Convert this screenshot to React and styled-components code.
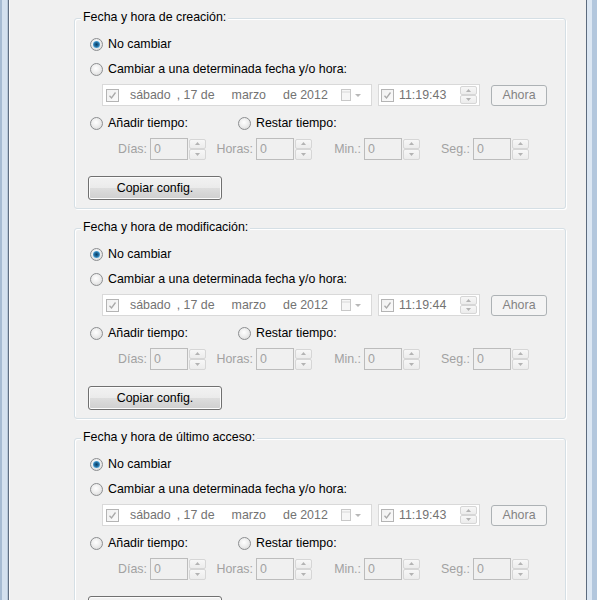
import React from "react";
import styled, { createGlobalStyle, css } from "styled-components";

const Global = createGlobalStyle`
  html, body { margin: 0; padding: 0; background: #f0f0f0; }
  body {
    font-family: "Liberation Sans", Arial, sans-serif;
    font-size: 12.4px;
    color: #000;
    overflow: hidden;
  }
`;

const Window = styled.div`
  display: flex;
  width: 597px;
  height: 600px;
  overflow: hidden;
  background: #f0f0f0;
`;

const LeftFrame = styled.div`
  flex: none;
  width: 10px;
  background: linear-gradient(
    to right,
    #a6bbd2 0, #a6bbd2 2px,
    #d3e0ee 2px, #d3e0ee 7px,
    #b7c7d8 7px, #b7c7d8 8px,
    #5e6d80 8px, #5e6d80 9px,
    #fafafa 9px
  );
`;

const RightFrame = styled.div`
  flex: none;
  width: 11px;
  background: linear-gradient(
    to right,
    #5c6b7e 0, #5c6b7e 1px,
    #dce7f3 1px, #dce7f3 6px,
    #b3c7dd 6px
  );
`;

const Content = styled.main`
  flex: 1;
  padding: 18px 0 0 64px;
  display: flex;
  flex-direction: column;
  gap: 19px;
`;

const Group = styled.section`
  position: relative;
  flex: none;
  width: 492px;
  box-sizing: border-box;
  border: 1px solid #d5dfe5;
  border-radius: 3px;
  box-shadow: inset 1px 1px 0 #ffffff, 1px 1px 0 #ffffff;
  padding: 15px 0 8px 15px;
  display: flex;
  flex-direction: column;
  align-items: flex-start;
`;

const Legend = styled.span`
  position: absolute;
  top: -9px;
  left: 6px;
  padding: 0 2px;
  line-height: 15px;
  background: #f0f0f0;
`;

const Row = styled.div`
  display: flex;
  align-items: center;
  height: ${(p) => p.$h || 20}px;
  margin-top: ${(p) => p.$mt || 0}px;
  margin-left: ${(p) => p.$ml || 0}px;
`;

const RadioOption = styled.label`
  display: flex;
  align-items: center;
  gap: 5px;
  width: ${(p) => (p.$w ? `${p.$w}px` : "auto")};
  white-space: nowrap;
`;

const RadioCircle = styled.span`
  flex: none;
  width: 13px;
  height: 13px;
  box-sizing: border-box;
  border-radius: 50%;
  border: 1px solid #8c8e90;
  background: radial-gradient(circle at 45% 40%, #ffffff 0, #eeeeee 45%, #d2d2d2 100%);
  display: grid;
  place-items: center;
  ${(p) =>
    p.$checked &&
    css`
      &::after {
        content: "";
        width: 7px;
        height: 7px;
        border-radius: 50%;
        background: radial-gradient(circle at 50% 50%, #0e3c5e 0, #1f6a9c 40%, #5bb0e4 75%, #8fd0f2 100%);
      }
    `}
`;

const Picker = styled.div`
  display: flex;
  align-items: center;
  box-sizing: border-box;
  width: ${(p) => p.$w}px;
  height: 22px;
  margin-left: ${(p) => p.$ml || 0}px;
  padding-left: ${(p) => p.$pl || 3}px;
  border: 1px solid #d9d9d9;
  background: #ffffff;
  color: #737373;
`;

const CheckBox = styled.span`
  flex: none;
  width: 13px;
  height: 13px;
  box-sizing: border-box;
  border: 1px solid #b4b4b4;
  background: linear-gradient(135deg, #f0f0f0, #fafafa);
  display: grid;
  place-items: center;
`;

const Seg = styled.span`
  margin-left: ${(p) => p.$ml || 0}px;
  white-space: nowrap;
`;

const DropIcon = styled.svg`
  margin-left: auto;
  margin-right: 8px;
  flex: none;
`;

const TimeSpin = styled.div`
  margin-left: auto;
  margin-right: 2px;
  display: flex;
  flex-direction: column;
  width: 17px;
  height: 18px;
`;

const FlatButton = styled.button`
  box-sizing: border-box;
  width: ${(p) => p.$w}px;
  height: ${(p) => p.$h}px;
  margin-left: ${(p) => p.$ml || 0}px;
  padding: 0;
  font: inherit;
  border-radius: 3px;
  ${(p) =>
    p.$disabled
      ? css`
          border: 1px solid #adb2b5;
          background: #f4f4f4;
          color: #838383;
        `
      : css`
          border: 1px solid #707070;
          background: linear-gradient(#f2f2f2 0%, #ebebeb 48%, #dddddd 52%, #cfcfcf 100%);
          color: #000;
          box-shadow: inset 0 0 0 1px #fcfcfc;
        `}
`;

const Field = styled.div`
  display: flex;
  align-items: center;
  justify-content: flex-end;
  width: ${(p) => p.$w}px;
  color: #a2a2a2;
`;

const FieldLabel = styled.span`
  margin-right: 3px;
  white-space: nowrap;
`;

const NumInput = styled.div`
  box-sizing: border-box;
  width: 38px;
  height: 22px;
  border: 1px solid #bcbcbc;
  background: #f0f0f0;
  padding-left: 3px;
  display: flex;
  align-items: center;
  color: #a2a2a2;
`;

const Spinner = styled.div`
  display: flex;
  flex-direction: column;
  width: 17px;
  height: 21px;
  margin-left: 1px;
`;

const SpinHalf = styled.div`
  flex: 1;
  box-sizing: border-box;
  border: 1px solid #d6d6d6;
  border-radius: 2px;
  background: linear-gradient(#f7f7f7, #ececec);
  display: grid;
  place-items: center;
`;

const Arrow = ({ down }) => (
  <svg width="5" height="3" viewBox="0 0 5 3">
    <polygon points={down ? "0,0 5,0 2.5,3" : "0,3 5,3 2.5,0"} fill="#b3b3b3" />
  </svg>
);

const SpinButtons = ({ as: Wrap = Spinner }) => (
  <Wrap>
    <SpinHalf>
      <Arrow />
    </SpinHalf>
    <SpinHalf>
      <Arrow down />
    </SpinHalf>
  </Wrap>
);

const Check = () => (
  <CheckBox>
    <svg width="9" height="9" viewBox="0 0 9 9">
      <polyline points="1.5,4.8 3.5,7 7.5,1.5" fill="none" stroke="#a9a9a9" strokeWidth="1.3" />
    </svg>
  </CheckBox>
);

const Radio = ({ checked, children, w }) => (
  <RadioOption $w={w}>
    <RadioCircle $checked={checked} />
    <span>{children}</span>
  </RadioOption>
);

const SpinField = ({ label, w }) => (
  <Field $w={w}>
    <FieldLabel>{label}</FieldLabel>
    <NumInput>0</NumInput>
    <SpinButtons />
  </Field>
);

const DateGroup = ({ title, time }) => (
  <Group>
    <Legend>{title}</Legend>
    <Row>
      <Radio checked>No cambiar</Radio>
    </Row>
    <Row $mt={5}>
      <Radio>Cambiar a una determinada fecha y/o hora:</Radio>
    </Row>
    <Row $mt={5} $h={22} $ml={12}>
      <Picker $w={270}>
        <Check />
        <Seg $ml={11}>sábado</Seg>
        <Seg $ml={6}>, 17 de</Seg>
        <Seg $ml={17}>marzo</Seg>
        <Seg $ml={17}>de 2012</Seg>
        <DropIcon width="22" height="14" viewBox="0 0 22 14">
          <rect x="0.5" y="1.5" width="9" height="11" fill="#f6f6f6" stroke="#c8c8c8" />
          <line x1="1" y1="4" x2="9" y2="4" stroke="#d8d8d8" />
          <polygon points="14,6 20,6 17,9" fill="#b8b8b8" />
        </DropIcon>
      </Picker>
      <Picker $w={102} $ml={6} $pl={2}>
        <Check />
        <Seg $ml={5}>{time}</Seg>
        <SpinButtons as={TimeSpin} />
      </Picker>
      <FlatButton $disabled $w={56} $h={21} $ml={11}>
        Ahora
      </FlatButton>
    </Row>
    <Row $mt={7}>
      <Radio w={148}>Añadir tiempo:</Radio>
      <Radio>Restar tiempo:</Radio>
    </Row>
    <Row $mt={5} $h={22}>
      <SpinField label="Días:" w={116} />
      <SpinField label="Horas:" w={106} />
      <SpinField label="Min.:" w={108} />
      <SpinField label="Seg.:" w={109} />
    </Row>
    <Row $mt={16} $h={24} $ml={-2}>
      <FlatButton $w={134} $h={24}>
        Copiar config.
      </FlatButton>
    </Row>
  </Group>
);

export default function App() {
  return (
    <>
      <Global />
      <Window>
        <LeftFrame />
        <Content>
          <DateGroup title="Fecha y hora de creación:" time="11:19:43" />
          <DateGroup title="Fecha y hora de modificación:" time="11:19:44" />
          <DateGroup title="Fecha y hora de último acceso:" time="11:19:43" />
        </Content>
        <RightFrame />
      </Window>
    </>
  );
}
